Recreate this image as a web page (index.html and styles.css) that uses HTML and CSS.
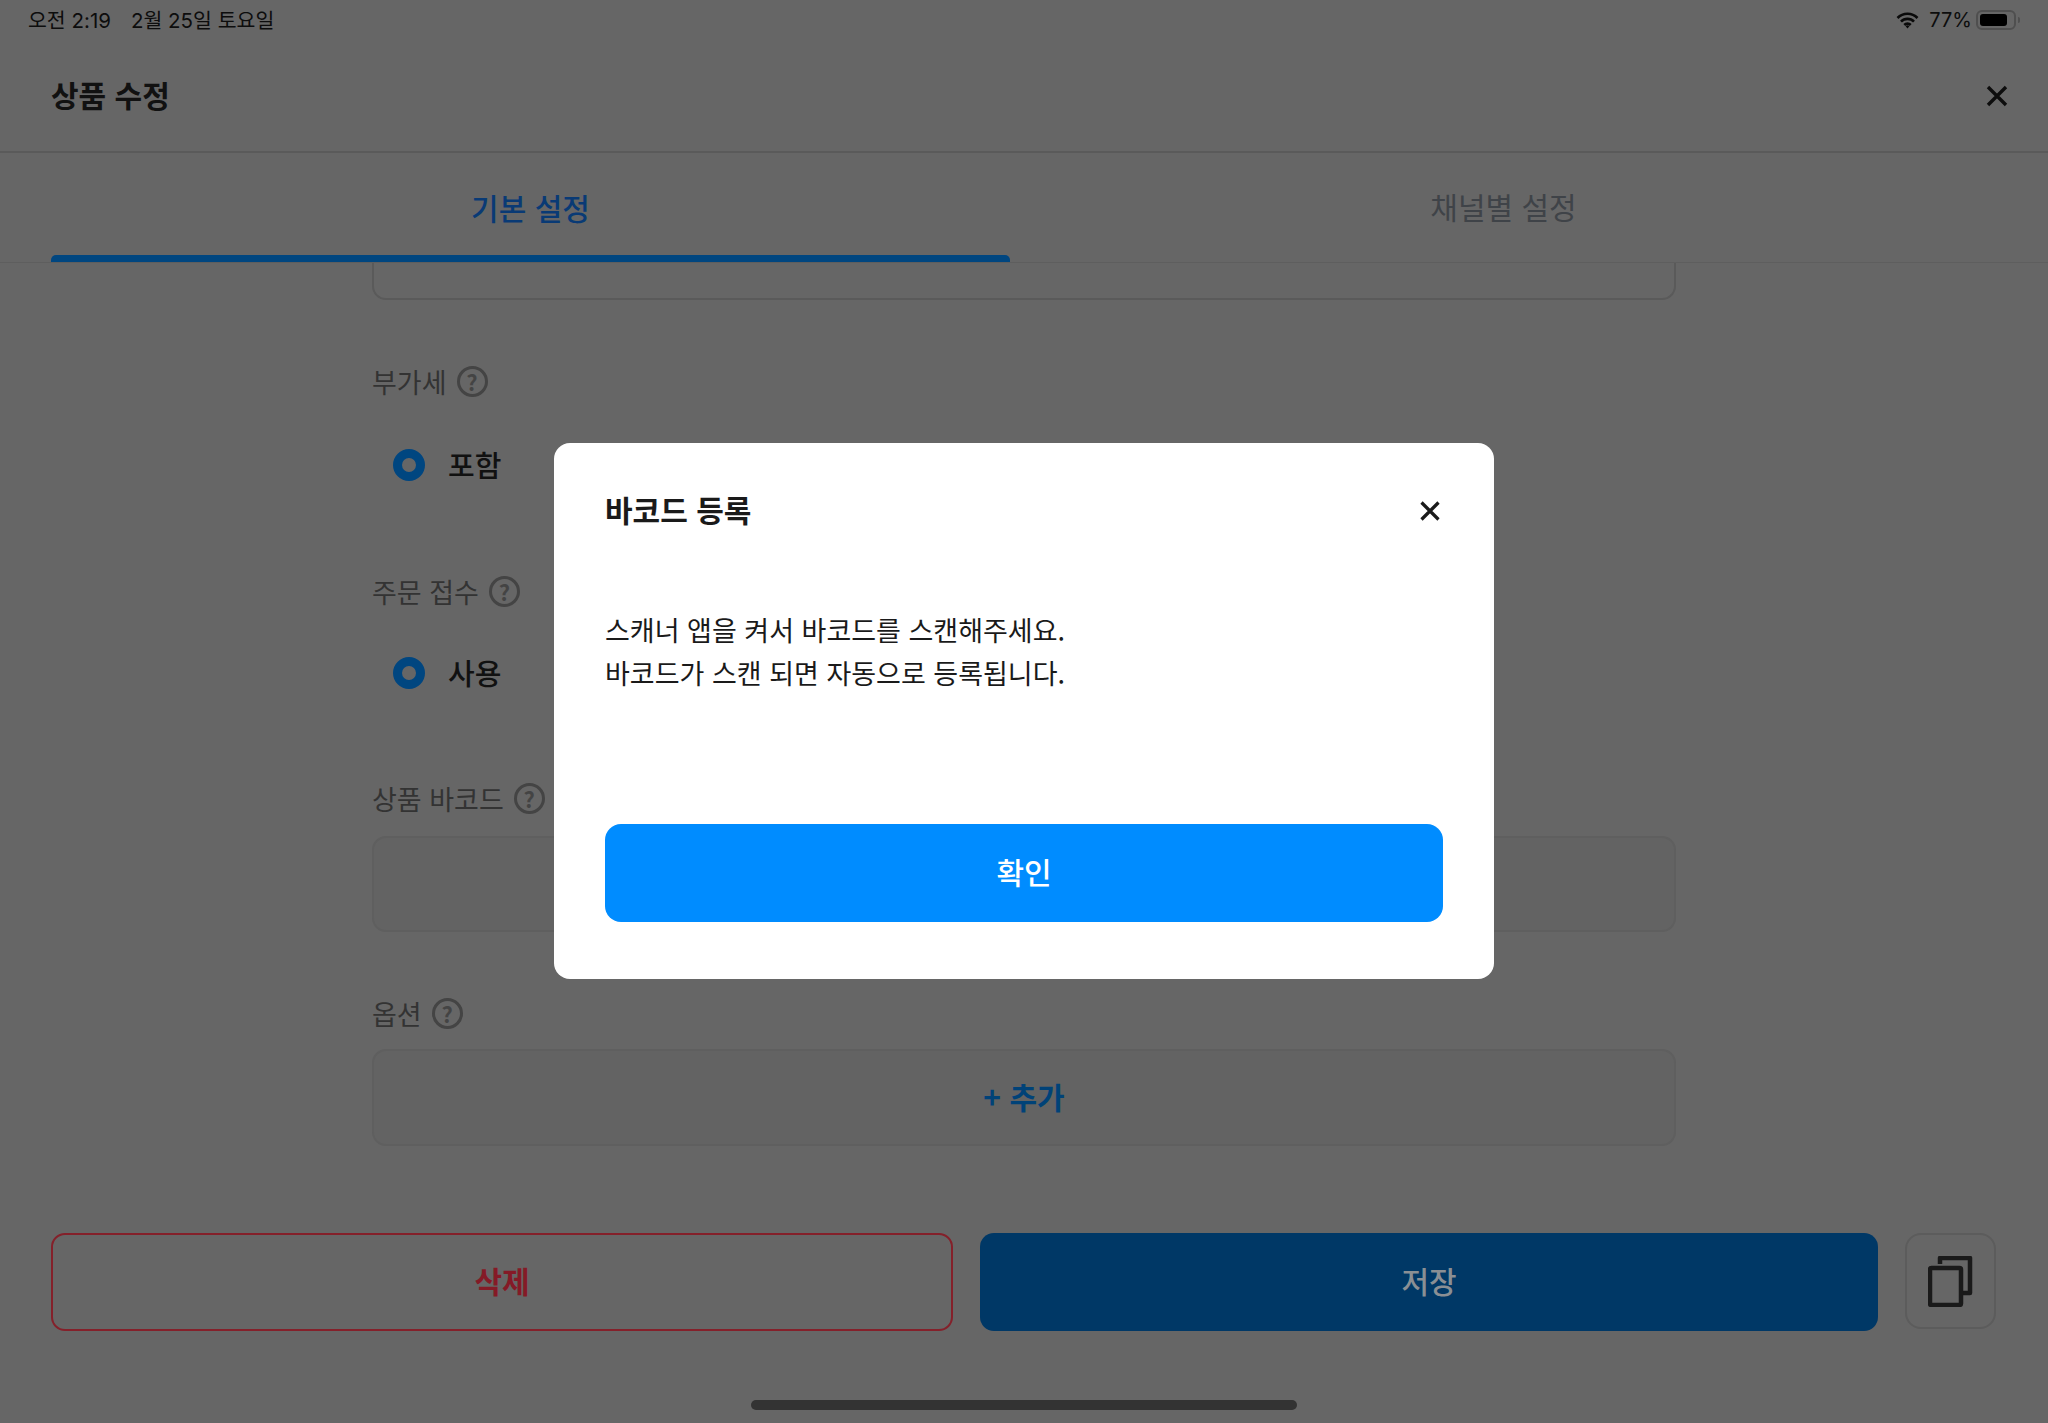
FILE: index.html
```html
<!DOCTYPE html>
<html lang="ko">
  <head>
    <meta charset="UTF-8" />
    <meta name="viewport" content="width=device-width, initial-scale=1.0" />
    <title>상품 수정</title>
    <link rel="stylesheet" href="styles.css">
  </head>
  <body>
    <div class="status-bar">
      <div class="status-time">오전 2:19<span class="status-date">2월 25일 토요일</span></div>
      <div class="status-right">
        <svg class="wifi" width="23" height="17" viewBox="0 0 23 17">
          <path d="M1.5 6a14 14 0 0 1 20 0M5 9.7a9 9 0 0 1 13 0M8.3 13a4.4 4.4 0 0 1 6.4 0" fill="none" stroke="#0a0a0a" stroke-width="2.6" />
          <path d="M9.6 14.2a2.6 2.6 0 0 1 3.8 0L11.5 16.6z" fill="#0a0a0a" />
        </svg>
        <span class="battery-text">77%</span>
        <div class="battery"><div class="battery-fill"></div></div>
        <div class="battery-nub"></div>
      </div>
    </div>

    <div class="top-bar">
      <h1>상품 수정</h1>
      <svg class="close-icon" width="22" height="22" viewBox="0 0 22 22">
        <path d="M2 2l18 18M20 2L2 20" stroke="#0d0d0d" stroke-width="3.4" fill="none" />
      </svg>
    </div>

    <div class="tabs">
      <div class="tab active"><span class="tab-label">기본 설정</span><div class="tab-bar"></div></div>
      <div class="tab"><span class="tab-label">채널별 설정</span></div>
    </div>

    <div class="content">
      <div class="input-clipped"></div>

      <div class="field-label first">부가세 <span class="help">?</span></div>
      <div class="radio-row"><span class="radio"></span><span class="radio-text">포함</span></div>

      <div class="field-label second">주문 접수 <span class="help">?</span></div>
      <div class="radio-row tight"><span class="radio"></span><span class="radio-text">사용</span></div>

      <div class="field-label third">상품 바코드 <span class="help">?</span></div>
      <div class="input-box barcode"></div>

      <div class="field-label first">옵션 <span class="help">?</span></div>
      <div class="input-box option"><span class="add-text">+ 추가</span></div>
    </div>

    <div class="footer">
      <div class="btn btn-delete"><span class="btn-text">삭제</span></div>
      <div class="btn btn-save"><span class="btn-text">저장</span></div>
      <div class="btn-copy">
        <svg width="46" height="51" viewBox="0 0 46 51">
          <path d="M12 8V2h30v35h-8" fill="none" stroke="#1a1a1a" stroke-width="4.5" stroke-linejoin="round" />
          <rect x="2" y="12" width="31" height="37" rx="1.5" fill="none" stroke="#1a1a1a" stroke-width="4.5" />
        </svg>
      </div>
    </div>

    <div class="home-bar"></div>

    <div class="modal-layer">
      <div class="modal">
        <div class="modal-head">
          <h2>바코드 등록</h2>
          <svg class="modal-close" width="22" height="22" viewBox="0 0 22 22">
            <path d="M2.5 2.5l17 17M19.5 2.5l-17 17" stroke="#1a1a1a" stroke-width="3.2" fill="none" />
          </svg>
        </div>
        <p class="modal-text">스캐너 앱을 켜서 바코드를 스캔해주세요.<br />바코드가 스캔 되면 자동으로 등록됩니다.</p>
        <div class="modal-btn"><span class="btn-text">확인</span></div>
      </div>
    </div>
  </body>
</html>
```

FILE: styles.css
```css
body {
  font-family: "Noto Sans CJK KR", sans-serif;
  background-color: #666666;
  margin: 0;
  padding: 0;
  height: 100vh;
  overflow: hidden;
}
h1,
h2,
p {
  margin: 0;
}

/* status bar */
.status-bar {
  height: 40px;
  padding: 0 28px;
  display: flex;
  align-items: center;
  justify-content: space-between;
  color: #0d0d0d;
  font-family: Inter, "Noto Sans CJK KR", sans-serif;
  font-size: 20.5px;
}
.status-time {
  padding-bottom: 2px;
}
.status-date {
  margin-left: 20px;
}
.status-right {
  display: flex;
  align-items: center;
}
.battery-text {
  margin-left: 10px;
  font-size: 20px;
}
.battery {
  width: 40px;
  height: 20px;
  margin-left: 4px;
  box-sizing: border-box;
  border: 2px solid #4f4f4f;
  border-radius: 6px;
  padding: 2px;
}
.battery-fill {
  width: 27px;
  height: 100%;
  background-color: #000;
  border-radius: 3px;
}
.battery-nub {
  width: 2px;
  height: 6px;
  margin-left: 2px;
  background-color: #4f4f4f;
  border-radius: 0 2px 2px 0;
}

/* header */
.top-bar {
  height: 111px;
  padding: 0 40px 0 51px;
  display: flex;
  align-items: center;
  justify-content: space-between;
  border-bottom: 2px solid #5a5a5a;
}
.top-bar h1 {
  padding-bottom: 4px;
  font-size: 30px;
  font-weight: 700;
  color: #111;
}
.close-icon {
  margin-top: 1px;
}
.tabs {
  height: 109px;
  padding: 0 51px;
  display: grid;
  grid-template-columns: 959px 1fr;
  border-bottom: 1px solid #5e5e5e;
}
.tab {
  display: flex;
  flex-direction: column;
  align-items: center;
  color: #3f4348;
  font-size: 30px;
}
.tab-label {
  flex: 1;
  display: flex;
  align-items: center;
  padding-bottom: 3px;
}
.tab.active {
  color: #093a75;
  font-weight: 500;
}
.tab.active .tab-label {
  padding-top: 6px;
  padding-bottom: 0;
}
.tab-bar {
  width: 100%;
  height: 7px;
  background-color: #004680;
  border-radius: 5px 5px 0 0;
}

/* form */
.content {
  width: 1304px;
  margin: 0 auto;
}
.input-clipped {
  height: 35px;
  border: 2px solid #5a5a5a;
  border-top: none;
  border-radius: 0 0 14px 14px;
}
.field-label {
  height: 32px;
  display: flex;
  align-items: center;
  gap: 10px;
  color: #333;
  font-size: 27px;
}
.field-label.first {
  margin-top: 65px;
}
.field-label.second {
  margin-top: 94px;
}
.field-label.third {
  margin-top: 93px;
}
.help {
  width: 31px;
  height: 31px;
  box-sizing: border-box;
  display: flex;
  align-items: center;
  justify-content: center;
  border: 3px solid #444;
  border-radius: 50%;
  color: #444;
  font-size: 22px;
  font-weight: 700;
}
.radio-row {
  height: 32px;
  margin-top: 52px;
  padding-left: 21px;
  display: flex;
  align-items: center;
  gap: 23px;
}
.radio-row.tight {
  margin-top: 50px;
}
.radio {
  width: 32px;
  height: 32px;
  box-sizing: border-box;
  border: 9px solid #004680;
  border-radius: 50%;
}
.radio-text {
  padding-bottom: 3px;
  color: #111;
  font-size: 29px;
  font-weight: 500;
}
.input-box {
  height: 96px;
  box-sizing: border-box;
  display: flex;
  align-items: center;
  justify-content: center;
  background-color: #636363;
  border: 2px solid #5f5f5f;
  border-radius: 14px;
}
.input-box.barcode {
  margin-top: 22px;
}
.input-box.option {
  margin-top: 20px;
  height: 97px;
}
.add-text {
  padding-bottom: 3px;
  color: #004278;
  font-size: 30px;
  font-weight: 700;
}

/* bottom buttons */
.footer {
  margin-top: 87px;
  padding: 0 52px 0 51px;
  display: flex;
  gap: 27px;
}
.btn {
  flex: 1;
  height: 98px;
  box-sizing: border-box;
  display: flex;
  align-items: center;
  justify-content: center;
  border-radius: 14px;
  font-size: 30px;
  font-weight: 500;
}
.btn-text {
  padding-bottom: 4px;
}
.btn-delete {
  border: 2px solid #84202a;
  color: #851a26;
  font-weight: 700;
}
.btn-save {
  background-color: #003866;
  color: #8a8f94;
}
.btn-copy {
  width: 91px;
  height: 96px;
  box-sizing: border-box;
  display: flex;
  align-items: center;
  justify-content: center;
  border: 2px solid #5c5c5c;
  border-radius: 16px;
}
.home-bar {
  width: 546px;
  height: 10px;
  margin: 69px auto 0;
  background-color: #333;
  border-radius: 5px;
}

/* dialog */
.modal-layer {
  position: fixed;
  top: 0;
  right: 0;
  bottom: 0;
  left: 0;
  padding-bottom: 1px;
  display: flex;
  align-items: center;
  justify-content: center;
}
.modal {
  width: 940px;
  box-sizing: border-box;
  padding: 49px 51px 57px;
  background-color: white;
  border-radius: 16px;
}
.modal-head {
  height: 36px;
  display: flex;
  align-items: center;
  justify-content: space-between;
  padding-right: 2px;
}
.modal-head h2 {
  padding-bottom: 3px;
  font-size: 30px;
  font-weight: 700;
  color: #1a1a1a;
}
.modal-close {
  margin-top: 2px;
}
.modal-text {
  margin-top: 80px;
  color: #1a1a1a;
  font-size: 27px;
  line-height: 43px;
}
.modal-btn {
  height: 98px;
  margin-top: 130px;
  display: flex;
  align-items: center;
  justify-content: center;
  background-color: #008cff;
  border-radius: 16px;
  color: white;
  font-size: 30px;
  font-weight: 500;
}
```
